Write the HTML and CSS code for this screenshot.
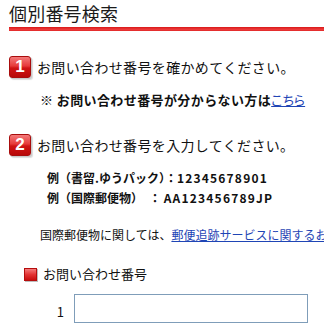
FILE: index.html
```html
<!DOCTYPE html>
<html lang="ja">
<head>
<meta charset="utf-8">
<link rel="stylesheet" href="styles.css">
</head>
<body>
<div class="page">
  <h1 class="title">個別番号検索</h1>
  <div class="rule"></div>

  <div class="step step-first">
    <span class="badge">1</span>
    <span class="step-text">お問い合わせ番号を確かめてください。</span>
  </div>
  <p class="note"><b class="note-strong">※ お問い合わせ番号が分からない方は</b><a class="link link-here" href="#">こちら</a></p>

  <div class="step step-second">
    <span class="badge">2</span>
    <span class="step-text">お問い合わせ番号を入力してください。</span>
  </div>
  <div class="examples">
    <p class="example">例（書留.ゆうパック）：<span class="code">12345678901</span></p>
    <p class="example">例（国際郵便物）　： <span class="code">AA123456789JP</span></p>
  </div>

  <p class="intl">国際郵便物に関しては、<a class="link" href="#">郵便追跡サービスに関するお問い合わせ</a></p>

  <div class="field-label">
    <span class="square"></span>
    <span class="field-label-text">お問い合わせ番号</span>
  </div>
  <div class="field-row">
    <span class="index">1</span>
    <input class="number-input" type="text">
  </div>
</div>
</body>
</html>
```

FILE: styles.css
```css
html, body {
  margin: 0;
  padding: 0;
  background: #ffffff;
}

body {
  width: 324px;
  height: 328px;
  overflow: hidden;
  font-family: "Noto Sans CJK JP", "Noto Sans", sans-serif;
  color: #111111;
}

.page {
  padding-left: 9px;
}

.title {
  margin: 0;
  font-size: 18px;
  line-height: 26px;
  font-weight: normal;
  letter-spacing: 0.2px;
  color: #1a1a1a;
}

.rule {
  margin-top: 1px;
  height: 4px;
  background: linear-gradient(#d81818, #ee3b3b 60%, #e02828);
}

.step {
  display: flex;
  align-items: center;
  gap: 6px;
  height: 24px;
}

.step-first {
  margin-top: 24px;
}

.step-second {
  margin-top: 25px;
}

.badge {
  width: 22px;
  height: 22px;
  box-sizing: border-box;
  border-radius: 3px;
  border: 1px solid #a80d0d;
  background: linear-gradient(#f47a7a 0%, #e63a3a 45%, #d01414 55%, #b80808 100%);
  box-shadow: 1px 1px 0 #c9c9c9, 2px 2px 1px #dddddd;
  color: #ffffff;
  font-family: "Liberation Sans", Arial, sans-serif;
  font-weight: bold;
  font-size: 17px;
  line-height: 20px;
  text-align: center;
}

.step-text {
  font-size: 14px;
  letter-spacing: 0.35px;
  line-height: 20px;
  color: #111111;
}

.note {
  margin: 13px 0 0;
  padding-left: 31px;
  font-size: 13px;
  line-height: 16px;
  white-space: nowrap;
}

.note-strong {
  letter-spacing: 0.4px;
}

.link {
  color: #1f45b5;
  text-decoration: underline;
}

.link-here {
  font-feature-settings: "palt";
}

.examples {
  margin-top: 11px;
  padding-left: 38px;
}

.example {
  margin: 0;
  font-size: 12px;
  line-height: 20px;
  font-weight: bold;
  white-space: nowrap;
}

.code {
  letter-spacing: 1.2px;
}

.intl {
  margin: 19px 0 0;
  padding-left: 31px;
  font-size: 12px;
  line-height: 16px;
  white-space: nowrap;
}

.field-label {
  margin-top: 24px;
  padding-left: 15px;
  display: flex;
  align-items: center;
  gap: 6px;
  height: 14px;
}

.square {
  width: 13px;
  height: 13px;
  box-sizing: border-box;
  border: 1px solid #b50d0d;
  background: linear-gradient(#f47a7a 0%, #e33434 50%, #c80e0e 100%);
  box-shadow: 1px 1px 0 #bdbdbd;
}

.field-label-text {
  font-size: 13px;
  line-height: 16px;
}

.field-row {
  margin-top: 13px;
  display: flex;
  align-items: center;
  gap: 10px;
}

.index {
  width: 55px;
  text-align: right;
  font-size: 13px;
  line-height: 16px;
  padding-top: 6px;
}

.number-input {
  width: 234px;
  height: 29px;
  box-sizing: border-box;
  margin: 0;
  border: 1px solid #7f9db9;
  background: #ffffff;
  padding: 0 4px;
}
```
